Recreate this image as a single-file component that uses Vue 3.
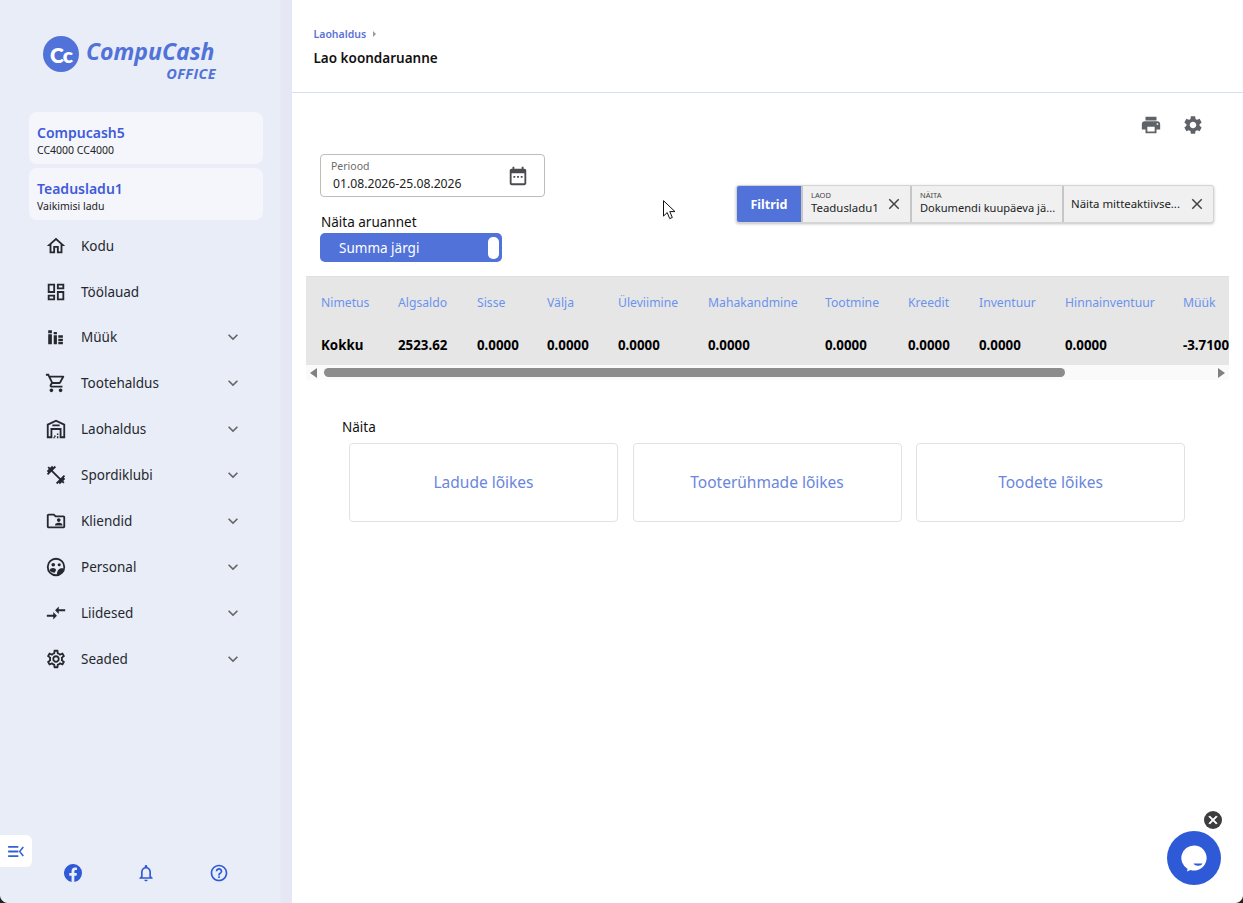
<template>
  <div class="page">
    <aside class="sidebar">
      <div class="logo">
        <div class="logo-mark"><span>Cc</span></div>
        <div class="logo-text">
          <div class="logo-name">CompuCash</div>
          <div class="logo-sub">OFFICE</div>
        </div>
      </div>

      <div class="info-card">
        <strong>Compucash5</strong>
        <span>CC4000 CC4000</span>
      </div>
      <div class="info-card">
        <strong>Teadusladu1</strong>
        <span>Vaikimisi ladu</span>
      </div>

      <nav class="menu">
        <div v-for="item in menu" :key="item.label" class="menu-item">
          <svg class="menu-icon" viewBox="0 0 24 24" v-html="item.icon"></svg>
          <span class="menu-label">{{ item.label }}</span>
          <svg v-if="item.arrow" class="menu-arrow" viewBox="0 0 24 24">
            <path d="M16.59 8.59L12 13.17 7.41 8.59 6 10l6 6 6-6z" />
          </svg>
        </div>
      </nav>

      <div class="side-footer">
        <div class="collapse-btn">
          <svg viewBox="0 0 18 14" width="17" height="13">
            <path d="M0 1h11v2H0zM0 6h11v2H0zM0 11h11v2H0zM17 2.600L13.400 7l3.600 4.400-1.400 1L11.400 7l4.200-5.400z" />
          </svg>
        </div>
        <div class="side-links">
          <svg class="fb" viewBox="0 0 24 24"><path d="M24 12a12 12 0 1 0-13.900 11.900v-8.400H7v-3.500h3.100V9.400c0-3 1.800-4.700 4.500-4.700 1.300 0 2.700.2 2.700.2v3h-1.500c-1.500 0-2 .9-2 1.900V12h3.400l-.5 3.500h-2.900v8.400A12 12 0 0 0 24 12z" /></svg>
          <svg viewBox="0 0 24 24"><path d="M12 22c1.100 0 2-.9 2-2h-4c0 1.100.9 2 2 2zm6-6v-5c0-3.070-1.630-5.640-4.500-6.320V4c0-.83-.67-1.500-1.500-1.500s-1.500.67-1.500 1.500v.68C7.640 5.360 6 7.920 6 11v5l-2 2v1h16v-1l-2-2zm-2 1H8v-6c0-2.480 1.510-4.500 4-4.500s4 2.020 4 4.500v6z" /></svg>
          <svg viewBox="0 0 24 24"><path d="M11 18h2v-2h-2v2zm1-16C6.480 2 2 6.480 2 12s4.480 10 10 10 10-4.480 10-10S17.520 2 12 2zm0 18c-4.410 0-8-3.590-8-8s3.590-8 8-8 8 3.590 8 8-3.590 8-8 8zm0-14c-2.210 0-4 1.790-4 4h2c0-1.100.9-2 2-2s2 .9 2 2c0 2-3 1.750-3 5h2c0-2.250 3-2.500 3-5 0-2.210-1.790-4-4-4z" /></svg>
        </div>
      </div>
    </aside>

    <main class="main">
      <header class="top-header">
        <div class="crumbs">
          <span>Laohaldus</span>
          <i class="crumb-arrow"></i>
        </div>
        <h1>Lao koondaruanne</h1>
      </header>

      <div class="tools">
        <svg viewBox="0 0 24 24"><path d="M19 8H5c-1.660 0-3 1.340-3 3v6h4v4h12v-4h4v-6c0-1.660-1.340-3-3-3zm-3 11H8v-5h8v5zm3-7c-.55 0-1-.45-1-1s.45-1 1-1 1 .45 1 1-.45 1-1 1zm-1-9H6v4h12V3z" /></svg>
        <svg viewBox="0 0 24 24"><path d="M19.140 12.940c.04-.3.06-.61.06-.94 0-.32-.02-.64-.07-.94l2.030-1.580c.18-.14.23-.41.12-.61l-1.920-3.320c-.12-.22-.37-.29-.59-.22l-2.390.96c-.5-.38-1.030-.7-1.620-.94l-.36-2.540c-.04-.24-.24-.41-.48-.41h-3.840c-.24 0-.43.17-.47.41l-.36 2.540c-.59.24-1.130.57-1.620.94l-2.390-.96c-.22-.08-.47 0-.59.22L2.740 8.870c-.12.21-.08.47.12.61l2.030 1.580c-.05.3-.09.63-.09.94s.02.64.07.94l-2.030 1.580c-.18.14-.23.41-.12.61l1.920 3.320c.12.22.37.29.59.22l2.390-.96c.5.38 1.030.7 1.620.94l.36 2.540c.05.24.24.41.48.41h3.840c.24 0 .44-.17.47-.41l.36-2.540c.59-.24 1.130-.56 1.620-.94l2.390.96c.22.08.47 0 .59-.22l1.920-3.320c.12-.22.07-.47-.12-.61l-2.010-1.580zM12 15.600c-1.980 0-3.600-1.620-3.600-3.600s1.620-3.600 3.600-3.600 3.600 1.620 3.600 3.600-1.620 3.600-3.600 3.600z" /></svg>
      </div>

      <section class="controls">
        <div class="controls-left">
          <div class="period">
            <div class="period-text">
              <label>Periood</label>
              <div>01.08.2026-25.08.2026</div>
            </div>
            <svg viewBox="0 0 24 24"><path d="M19 4h-1V2h-2v2H8V2H6v2H5c-1.100 0-2 .9-2 2v14c0 1.100.9 2 2 2h14c1.100 0 2-.9 2-2V6c0-1.100-.9-2-2-2zm0 16H5V9h14v11zM7 12h2v2H7zm4 0h2v2h-2zm4 0h2v2h-2z" /></svg>
          </div>
          <div class="report-label">Näita aruannet</div>
          <div class="report-toggle">
            <span>Summa järgi</span>
            <i></i>
          </div>
        </div>

        <div class="filters">
          <div class="filter-title">Filtrid</div>
          <div v-for="f in filters" :key="f.value" class="chip" :class="f.cls">
            <div class="chip-text">
              <small v-if="f.label">{{ f.label }}</small>
              <span>{{ f.value }}</span>
            </div>
            <svg v-if="f.close" viewBox="0 0 24 24"><path d="M19 6.410L17.590 5 12 10.590 6.410 5 5 6.410 10.590 12 5 17.590 6.410 19 12 13.410 17.590 19 19 17.590 13.410 12z" /></svg>
          </div>
        </div>
      </section>

      <section class="table-wrap">
        <div class="table-scroll">
          <table>
            <colgroup>
              <col v-for="c in columns" :key="c.name" :style="{ width: c.width + 'px' }" />
            </colgroup>
            <thead>
              <tr>
                <th v-for="c in columns" :key="c.name">{{ c.name }}</th>
              </tr>
            </thead>
            <tbody>
              <tr>
                <td v-for="c in columns" :key="c.name">{{ c.total }}</td>
              </tr>
            </tbody>
          </table>
        </div>
        <div class="scrollbar">
          <i class="arrow-left"></i>
          <div class="thumb"></div>
          <i class="arrow-right"></i>
        </div>
      </section>

      <section class="show">
        <div class="show-label">Näita</div>
        <div class="show-cards">
          <div class="show-card">Ladude lõikes</div>
          <div class="show-card">Tooterühmade lõikes</div>
          <div class="show-card">Toodete lõikes</div>
        </div>
      </section>
    </main>

    <!-- hiirekursor ekraanipildil -->
    <svg class="cursor" viewBox="0 0 13 20" width="13" height="20">
      <path d="M.5.7v15.400l3.700-3.500 2.500 6 2.600-1.100-2.500-5.900h5.200z" fill="#fff" stroke="#111" stroke-width="1" />
    </svg>

    <div class="chat-close">
      <svg viewBox="0 0 24 24" width="14" height="14"><path d="M19 6.410L17.590 5 12 10.590 6.410 5 5 6.410 10.590 12 5 17.590 6.410 19 12 13.410 17.590 19 19 17.590 13.410 12z" /></svg>
    </div>
    <div class="chat">
      <svg viewBox="0 0 28 28" width="28" height="28">
        <path d="M14 1.400a12.600 12.600 0 1 1-3.500 24.700L7 27.500l.6-2.600A12.600 12.600 0 0 1 14 1.400z" fill="#fff" />
        <path d="M13.500 19.500h9c-.8 1.500-2.400 2.200-4.500 2.200s-3.700-.7-4.500-2.200z" fill="#2f5ad7" />
      </svg>
    </div>

    <!-- akna ümarad nurgad -->
    <i class="corner corner-left"></i>
    <i class="corner corner-right"></i>
  </div>
</template>

<script setup>
const menu = [
  { label: 'Kodu', arrow: false, icon: '<path d="M12 5.690l5 4.500V18h-2v-6H9v6H7v-7.810l5-4.500M12 3L2 12h3v8h6v-6h2v6h6v-8h3L12 3z"/>' },
  { label: 'Töölauad', arrow: false, icon: '<path d="M19 5v2h-4V5h4M9 5v6H5V5h4m10 8v6h-4v-6h4M9 17v2H5v-2h4M21 3h-8v6h8V3zM11 3H3v10h8V3zm10 8h-8v10h8V11zm-10 4H3v6h8v-6z"/>' },
  { label: 'Müük', arrow: true, icon: '<path d="M3.500 4.500h4V8h-4zM3.500 9h4v11h-4zM9.500 10h3.500v10H9.500zM9.500 6.500h3.500V9H9.500zM14.500 10h5v2.800h-5zM14.500 13.800h5v2.500h-5zM14.500 17.300h5V20h-5z"/>' },
  { label: 'Tootehaldus', arrow: true, icon: '<path d="M15.550 13c.75 0 1.410-.41 1.750-1.030l3.580-6.490c.37-.66-.11-1.480-.87-1.480H5.210l-.94-2H1v2h2l3.600 7.590-1.350 2.440C4.520 15.370 5.480 17 7 17h12v-2H7l1.100-2h7.450zM6.160 6h12.150l-2.760 5H8.530L6.160 6zM7 18c-1.100 0-1.990.9-1.990 2S5.900 22 7 22s2-.9 2-2-.9-2-2-2zm10 0c-1.100 0-1.990.9-1.990 2s.89 2 1.990 2 2-.9 2-2-.9-2-2-2z"/>' },
  { label: 'Laohaldus', arrow: true, icon: '<path d="M12 2L2 6.500V22h6v-9h8v9h6V6.500L12 2zm8 18h-2v-9H6v9H4V7.800l8-3.600 8 3.600V20z"/><path d="M8 7h8v2H8zM10 19h1.600v1.600H10zM13 17h1.600v1.600H13zM13 20h1.600v2H13zM9 21h2v1H9z"/>' },
  { label: 'Spordiklubi', arrow: true, icon: '<path d="M20.570 14.860L22 13.430 20.570 12 17 15.570 8.430 7 12 3.430 10.570 2 9.140 3.430 7.710 2 5.570 4.140 4.140 2.710 2.710 4.140l1.430 1.430L2 7.710l1.430 1.430L2 10.570 3.430 12 7 8.430 15.570 17 12 20.570 13.430 22l1.430-1.430L16.290 22l2.140-2.140 1.430 1.430 1.430-1.430-1.430-1.430L22 16.290z"/>' },
  { label: 'Kliendid', arrow: true, icon: '<path d="M20 6h-8l-2-2H4c-1.100 0-2 .9-2 2v12c0 1.100.9 2 2 2h16c1.100 0 2-.9 2-2V8c0-1.100-.9-2-2-2zm0 12H4V6h5.170l2 2H20v10zm-5-5c1.100 0 2-.9 2-2s-.9-2-2-2-2 .9-2 2 .9 2 2 2zm-4 4h8v-1c0-1.330-2.670-2-4-2s-4 .67-4 2v1z"/>' },
  { label: 'Personal', arrow: true, icon: '<path d="M12 2a10 10 0 1 0 0 20 10 10 0 0 0 0-20zm0 18a8 8 0 1 1 0-16 8 8 0 0 1 8 8c0 .5 0 1-.1 1.500-1.600-.5-3.700-.2-5 1.100-1.100 1.100-1.900 3.300-2 5.300-.3.1-.6.1-.9.1z"/><circle cx="9" cy="9.500" r="2"/><circle cx="15.500" cy="9.500" r="1.700"/><path d="M5 15.500c.4-1.600 2.200-2.500 3.800-2.500s3 .8 3.400 2.200c-.7 1-1.300 2-1.600 3.100-2.400-.3-4.500-1.200-5.600-2.800z"/><path d="M15 20.500c0-2 1-4 2.500-5 1-.6 2-.7 2.800-.5-.8 2.500-2.800 4.500-5.300 5.500z"/>' },
  { label: 'Liidesed', arrow: true, icon: '<path d="M9.010 14H2v2h7.010v3L13 15l-3.990-4v3zm5.980-1v-3H22V8h-7.010V5L11 9l3.990 4z"/>' },
  { label: 'Seaded', arrow: true, icon: '<path d="M19.430 12.980c.04-.32.07-.64.07-.98 0-.34-.03-.66-.07-.98l2.110-1.650c.19-.15.24-.42.12-.64l-2-3.460c-.09-.16-.26-.25-.44-.25-.06 0-.12.01-.17.03l-2.490 1c-.52-.4-1.080-.73-1.690-.98l-.38-2.650C14.460 2.180 14.250 2 14 2h-4c-.25 0-.46.18-.49.42l-.38 2.650c-.61.25-1.170.59-1.690.98l-2.490-1c-.06-.02-.12-.03-.18-.03-.17 0-.34.09-.43.25l-2 3.460c-.13.22-.07.49.12.64l2.110 1.650c-.04.32-.07.65-.07.98 0 .33.03.66.07.98l-2.110 1.650c-.19.15-.24.42-.12.64l2 3.460c.09.16.26.25.44.25.06 0 .12-.01.17-.03l2.490-1c.52.4 1.080.73 1.690.98l.38 2.650c.03.24.24.42.49.42h4c.25 0 .46-.18.49-.42l.38-2.650c.61-.25 1.170-.59 1.690-.98l2.490 1c.06.02.12.03.18.03.17 0 .34-.09.43-.25l2-3.460c.12-.22.07-.49-.12-.64l-2.110-1.650zm-1.980-1.710c.04.31.05.52.05.73 0 .21-.02.43-.05.73l-.14 1.130.89.7 1.080.84-.7 1.210-1.270-.51-1.040-.42-.9.68c-.43.32-.84.56-1.250.73l-1.060.43-.16 1.130-.2 1.350h-1.400l-.19-1.350-.16-1.130-1.060-.43c-.43-.18-.83-.41-1.230-.71l-.91-.7-1.060.43-1.270.51-.7-1.210 1.080-.84.89-.7-.14-1.130c-.03-.31-.05-.54-.05-.74s.02-.43.05-.73l.14-1.130-.89-.7-1.080-.84.7-1.210 1.270.51 1.040.42.9-.68c.43-.32.84-.56 1.250-.73l1.060-.43.16-1.130.2-1.350h1.390l.19 1.350.16 1.130 1.060.43c.43.18.83.41 1.230.71l.91.7 1.060-.43 1.270-.51.7 1.210-1.070.85-.89.7.14 1.130zM12 8c-2.210 0-4 1.790-4 4s1.790 4 4 4 4-1.790 4-4-1.790-4-4-4zm0 6c-1.100 0-2-.9-2-2s.9-2 2-2 2 .9 2 2-.9 2-2 2z"/>' }
]

const filters = [
  { label: 'LAOD', value: 'Teadusladu1', close: true, cls: 'chip-a' },
  { label: 'NÄITA', value: 'Dokumendi kuupäeva jä...', close: false, cls: 'chip-b' },
  { label: '', value: 'Näita mitteaktiivse...', close: true, cls: 'chip-c' }
]

const columns = [
  { name: 'Nimetus', total: 'Kokku', width: 77 },
  { name: 'Algsaldo', total: '2523.62', width: 79 },
  { name: 'Sisse', total: '0.0000', width: 70 },
  { name: 'Välja', total: '0.0000', width: 71 },
  { name: 'Üleviimine', total: '0.0000', width: 90 },
  { name: 'Mahakandmine', total: '0.0000', width: 117 },
  { name: 'Tootmine', total: '0.0000', width: 83 },
  { name: 'Kreedit', total: '0.0000', width: 71 },
  { name: 'Inventuur', total: '0.0000', width: 86 },
  { name: 'Hinnainventuur', total: '0.0000', width: 118 },
  { name: 'Müük', total: '-3.7100', width: 90 }
]
</script>

<style>
html, body {
  margin: 0;
  overflow: hidden;
}
</style>

<style scoped>
.page {
  position: relative;
  display: flex;
  height: 903px;
  background: #fff;
  font-family: "Noto Sans", Roboto, sans-serif;
  color: #111;
  overflow: hidden;
}

/* Sidebar */
.sidebar {
  width: 292px;
  flex-shrink: 0;
  display: flex;
  flex-direction: column;
  box-sizing: border-box;
  padding: 0 29px;
  background: linear-gradient(90deg, #e9edf7 279px, #e5e7f4 283px, #e5e7f4 292px);
}

.logo {
  height: 112px;
  display: flex;
  box-sizing: border-box;
  padding: 36px 0 0 14px;
  gap: 7px;
}

.logo-mark {
  width: 36px;
  height: 36px;
  border-radius: 50%;
  background: #5072d9;
  color: #fff;
  display: flex;
  align-items: center;
  justify-content: center;
  font: 800 21px/1 Lato, sans-serif;
  letter-spacing: -1px;
}

.logo-name {
  font: italic 700 23px/22px "Open Sans", sans-serif;
  color: #5072d9;
  margin-top: 4px;
  width: 130px;
  white-space: nowrap;
}

.logo-sub {
  font: italic 700 14.500px/16px "Open Sans", sans-serif;
  color: #5072d9;
  text-align: right;
  letter-spacing: .4px;
  margin-top: 4px;
}

.info-card {
  height: 52px;
  margin-bottom: 4px;
  border-radius: 8px;
  background: #f4f6fb;
  box-sizing: border-box;
  padding: 11px 8px 0;
  display: flex;
  flex-direction: column;
}

.info-card strong {
  font-size: 14px;
  line-height: 20px;
  font-weight: 600;
  color: #3f5bd9;
}

.info-card span {
  font-size: 10.500px;
  line-height: 14px;
  color: #222;
}

.menu {
  margin-top: -1.300px;
}

.menu-item {
  height: 45.900px;
  display: flex;
  align-items: center;
  padding-left: 16px;
}

.menu-icon {
  width: 22px;
  height: 22px;
  fill: #25282e;
  flex-shrink: 0;
}

.menu-label {
  margin-left: 14px;
  font-size: 13.500px;
  color: #25282e;
}

.menu-arrow {
  width: 20px;
  height: 20px;
  fill: #666;
  margin-left: auto;
  margin-right: 20px;
}

.side-footer {
  margin-top: auto;
  margin-left: -29px;
  padding-bottom: 20px;
}

.collapse-btn {
  width: 32px;
  height: 32px;
  background: #fff;
  border-radius: 0 6px 6px 0;
  display: flex;
  align-items: center;
  justify-content: center;
}

.collapse-btn svg {
  fill: #3260dc;
}

.side-links {
  display: grid;
  grid-template-columns: repeat(3, 73px);
  justify-items: center;
  align-items: center;
  padding-left: 36.500px;
  margin-top: -4px;
  height: 20px;
}

.side-links svg {
  width: 20px;
  height: 20px;
  fill: #2f5ad7;
}

.side-links .fb {
  width: 18px;
  height: 18px;
}

/* Main */
.main {
  flex: 1;
  min-width: 0;
}

.top-header {
  height: 93px;
  box-sizing: border-box;
  padding: 27px 22px 0 21.500px;
  border-bottom: 1px solid #d5dff0;
}

.crumbs {
  display: flex;
  align-items: center;
  gap: 7px;
  font-size: 10.500px;
  line-height: 14px;
  font-weight: 600;
  color: #5a73d8;
}

.crumb-arrow {
  width: 0;
  height: 0;
  border-left: 3px solid #9a9a9a;
  border-top: 3px solid transparent;
  border-bottom: 3px solid transparent;
}

.top-header h1 {
  margin: 9px 0 0;
  font-size: 13.500px;
  line-height: 17px;
  font-weight: 600;
  color: #111;
}

.tools {
  height: 61px;
  box-sizing: border-box;
  padding: 21px 39px 0 0;
  display: flex;
  justify-content: flex-end;
  gap: 20px;
}

.tools svg {
  width: 22px;
  height: 22px;
  fill: #5f6368;
}

.controls {
  height: 122px;
  display: flex;
  justify-content: space-between;
  padding: 0 29px 0 28px;
}

.period {
  width: 225px;
  height: 43px;
  box-sizing: border-box;
  border: 1px solid #bdbdbd;
  border-radius: 4px;
  display: flex;
  align-items: center;
  justify-content: space-between;
  padding: 0 15px 0 12px;
}

.period label {
  display: block;
  font-size: 10.500px;
  line-height: 14px;
  color: #6b6b6b;
  margin-left: -2px;
}

.period-text div {
  font-size: 12.200px;
  line-height: 17px;
  margin-top: 2px;
  color: #222;
}

.period svg {
  width: 22px;
  height: 22px;
  fill: #4a4a4f;
}

.report-label {
  margin: 16px 0 0 1px;
  font-size: 13.500px;
  line-height: 19px;
  color: #111;
}

.report-toggle {
  width: 182px;
  height: 29px;
  margin-top: 1px;
  background: #5072d9;
  border-radius: 5px;
  display: flex;
  align-items: center;
  justify-content: space-between;
  box-sizing: border-box;
  padding: 0 3px 0 19px;
  color: #fff;
  font-size: 13.500px;
}

.report-toggle i {
  width: 11px;
  height: 22px;
  background: #fff;
  border-radius: 5px;
}

.filters {
  height: 38px;
  width: 478px;
  box-sizing: border-box;
  margin-top: 31px;
  display: flex;
  border-radius: 3px;
  border: 1px solid #d4d4d4;
  box-shadow: 0 1px 3px rgba(0, 0, 0, .25);
  background: #f0f0f0;
}

.filter-title {
  width: 64px;
  background: #5072d9;
  color: #fff;
  font-size: 12.500px;
  font-weight: 700;
  display: flex;
  align-items: center;
  justify-content: center;
  border-radius: 2px 0 0 2px;
}

.chip {
  display: flex;
  align-items: center;
  box-sizing: border-box;
  border-left: 2px solid #c6c6c6;
  padding-left: 8px;
}

.chip-a { width: 109px; }
.chip-b { width: 152px; }
.chip-c { width: 151px; padding-left: 7px; }

.chip-text {
  flex: 1;
  min-width: 0;
  white-space: nowrap;
}

.chip small {
  display: block;
  font-size: 7.500px;
  line-height: 10px;
  color: #444;
  margin-top: -3px;
}

.chip span {
  display: block;
  font-size: 11.400px;
  line-height: 16px;
  color: #222;
}

.chip-b span {
  font-size: 11.100px;
}

.chip svg {
  width: 18px;
  height: 18px;
  fill: #444;
  margin-right: 7px;
}

/* Tabel */
.table-wrap {
  margin: 0 14px;
  width: 923px;
}

.table-scroll {
  overflow: hidden;
  background: #e6e6e6;
  border-top: 1px solid #e0e0e0;
}

table {
  border-collapse: collapse;
  table-layout: fixed;
  width: 952px;
  margin-left: 15px;
}

th, td {
  padding: 0;
  text-align: left;
  white-space: nowrap;
}

th {
  height: 51px;
  font-size: 12.200px;
  font-weight: 400;
  color: #6b93ec;
}

td {
  height: 37px;
  font-size: 13.300px;
  font-weight: 700;
  color: #000;
  vertical-align: top;
  line-height: 34px;
}

.scrollbar {
  height: 15px;
  background: #fafafa;
  display: flex;
  align-items: center;
  padding: 0 4px;
}

.arrow-left {
  width: 0;
  height: 0;
  border-right: 7px solid #808080;
  border-top: 5px solid transparent;
  border-bottom: 5px solid transparent;
}

.arrow-right {
  width: 0;
  height: 0;
  margin-left: auto;
  border-left: 7px solid #808080;
  border-top: 5px solid transparent;
  border-bottom: 5px solid transparent;
}

.thumb {
  width: 741px;
  height: 9px;
  margin-left: 7px;
  border-radius: 5px;
  background: #8c8c8c;
}

.show {
  padding: 38px 58px 0 50px;
}

.show-label {
  font-size: 13.500px;
  line-height: 19px;
  color: #111;
}

.show-cards {
  display: grid;
  grid-template-columns: repeat(3, 269px);
  gap: 14.500px;
  margin: 6px 0 0 7px;
}

.show-card {
  height: 79px;
  box-sizing: border-box;
  border: 1px solid #e2e2e2;
  border-radius: 4px;
  display: flex;
  align-items: center;
  justify-content: center;
  padding-bottom: 1px;
  font-size: 15.500px;
  color: #6a86dd;
}

/* Ülekihid */
.cursor {
  position: absolute;
  left: 663px;
  top: 200px;
}

.chat {
  position: absolute;
  left: 1167px;
  top: 831px;
  width: 54px;
  height: 54px;
  border-radius: 50%;
  background: #2f5ad7;
  display: flex;
  align-items: center;
  justify-content: center;
}

.chat-close {
  position: absolute;
  left: 1204px;
  top: 811px;
  width: 18px;
  height: 18px;
  border-radius: 50%;
  background: #3d3d3f;
  display: flex;
  align-items: center;
  justify-content: center;
}

.chat-close svg {
  fill: #fff;
  stroke: #fff;
  stroke-width: 1.500px;
}

.corner {
  position: absolute;
  bottom: 0;
  width: 8px;
  height: 8px;
}

.corner-left {
  left: 0;
  background: radial-gradient(circle at 100% 0, transparent 7.500px, #222 8.500px);
}

.corner-right {
  right: 0;
  background: radial-gradient(circle at 0 0, transparent 7.500px, #222 8.500px);
}
</style>
